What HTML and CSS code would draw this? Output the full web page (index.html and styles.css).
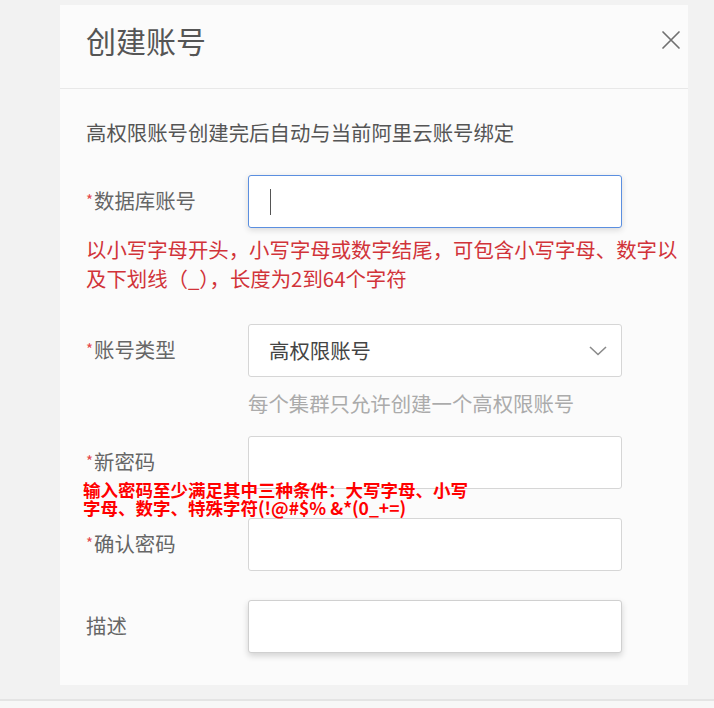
FILE: index.html
```html
<!DOCTYPE html>
<html lang="zh-CN">
<head>
<meta charset="utf-8">
<title>创建账号</title>
<link rel="stylesheet" href="styles.css">
</head>
<body>
<div class="stage">
  <div class="dialog">
    <div class="header">
      <h1 class="title">创建账号</h1>
      <svg class="close" width="20" height="20" viewBox="0 0 20 20" aria-label="关闭">
        <path d="M2 2 L18 18 M18 2 L2 18" stroke="#707070" stroke-width="1.7" fill="none" stroke-linecap="round"/>
      </svg>
    </div>
    <div class="body">
      <p class="intro">高权限账号创建完后自动与当前阿里云账号绑定</p>

      <div class="row row-first">
        <label class="label"><span class="req">*</span>数据库账号</label>
        <div class="field focused"><span class="caret"></span></div>
      </div>
      <p class="error">以小写字母开头，小写字母或数字结尾，可包含小写字母、数字以及下划线（_），长度为2到64个字符</p>

      <div class="row row-type">
        <label class="label"><span class="req">*</span>账号类型</label>
        <div class="field select">
          <span class="select-value">高权限账号</span>
          <svg class="chevron" width="18" height="10" viewBox="0 0 18 10">
            <path d="M1 1 L9 8.5 L17 1" stroke="#8a8a8a" stroke-width="1.6" fill="none"/>
          </svg>
        </div>
      </div>
      <p class="help">每个集群只允许创建一个高权限账号</p>

      <div class="row row-pass">
        <label class="label"><span class="req">*</span>新密码</label>
        <div class="field"></div>
      </div>

      <div class="row row-next">
        <label class="label"><span class="req">*</span>确认密码</label>
        <div class="field"></div>
      </div>

      <div class="row row-next">
        <label class="label plain">描述</label>
        <div class="field raised"></div>
      </div>
    </div>
    <div class="annotation">输入密码至少满足其中三种条件：大写字母、小写字母、数字、特殊字符(!@#$% &amp;*(0_+=)</div>
  </div>
</div>
<div class="bottom-bar"></div>
</body>
</html>
```

FILE: styles.css
```css
html, body {
  margin: 0;
  padding: 0;
}

body {
  background: #f2f2f2;
  font-family: "Noto Sans CJK SC", "Noto Sans", sans-serif;
  width: 714px;
  height: 708px;
  overflow: hidden;
}

.stage {
  height: 694px;
  padding: 5px 0 0 60px;
}

.dialog {
  position: relative;
  width: 628px;
  height: 680px;
  background: #fbfbfb;
}

.header {
  height: 84px;
  box-sizing: border-box;
  border-bottom: 1px solid #e8e8e8;
  display: flex;
  align-items: center;
  justify-content: space-between;
  padding: 0 7px 14px 26px;
}

.title {
  margin: 0;
  font-size: 30px;
  line-height: 36px;
  font-weight: 400;
  color: #555;
}

.close {
  display: block;
}

.body {
  padding-left: 26px;
}

.intro {
  margin: 29px 0 0;
  font-size: 20.4px;
  line-height: 29px;
  color: #555;
}

.row {
  display: grid;
  grid-template-columns: 162px 374px;
  align-items: center;
}

.row-first {
  margin-top: 28px;
}

.row-type {
  margin-top: 31px;
}

.row-pass {
  margin-top: 18px;
}

.row-next {
  margin-top: 29px;
}

.label {
  font-size: 20.4px;
  line-height: 29px;
  color: #666;
  white-space: nowrap;
  padding-bottom: 3px;
}

.req {
  color: #e5484d;
  font-size: 15px;
  vertical-align: 3px;
  margin-right: 1px;
}

.field {
  height: 53px;
  box-sizing: border-box;
  border: 1px solid #d6d6d6;
  border-radius: 3px;
  background: #fff;
  display: flex;
  align-items: center;
}

.field.focused {
  border-color: #5b8fe0;
  box-shadow: 0 2px 6px rgba(0, 0, 0, 0.14);
  padding-left: 21px;
}

.field.raised {
  box-shadow: 0 3px 6px rgba(0, 0, 0, 0.16);
  border-color: #d0d0d0;
}

.caret {
  display: block;
  width: 1px;
  height: 26px;
  background: #555;
}

.select {
  justify-content: space-between;
  padding: 0 14px 0 20px;
}

.select-value {
  font-size: 20.4px;
  line-height: 29px;
  color: #444;
}

.chevron {
  display: block;
}

.error {
  margin: 7px 0 0;
  font-size: 20.4px;
  line-height: 29px;
  color: #d13339;
}

.help {
  margin: 12px 0 0;
  padding-left: 162px;
  font-size: 20.4px;
  line-height: 29px;
  color: #ababab;
}

.annotation {
  position: absolute;
  left: 23px;
  top: 476px;
  width: 396px;
  font-size: 17.5px;
  line-height: 18px;
  font-weight: 700;
  color: #ff0000;
}

.bottom-bar {
  height: 9px;
  border-top: 2px solid #e4e4e4;
  background: #f7f7f7;
}
```
